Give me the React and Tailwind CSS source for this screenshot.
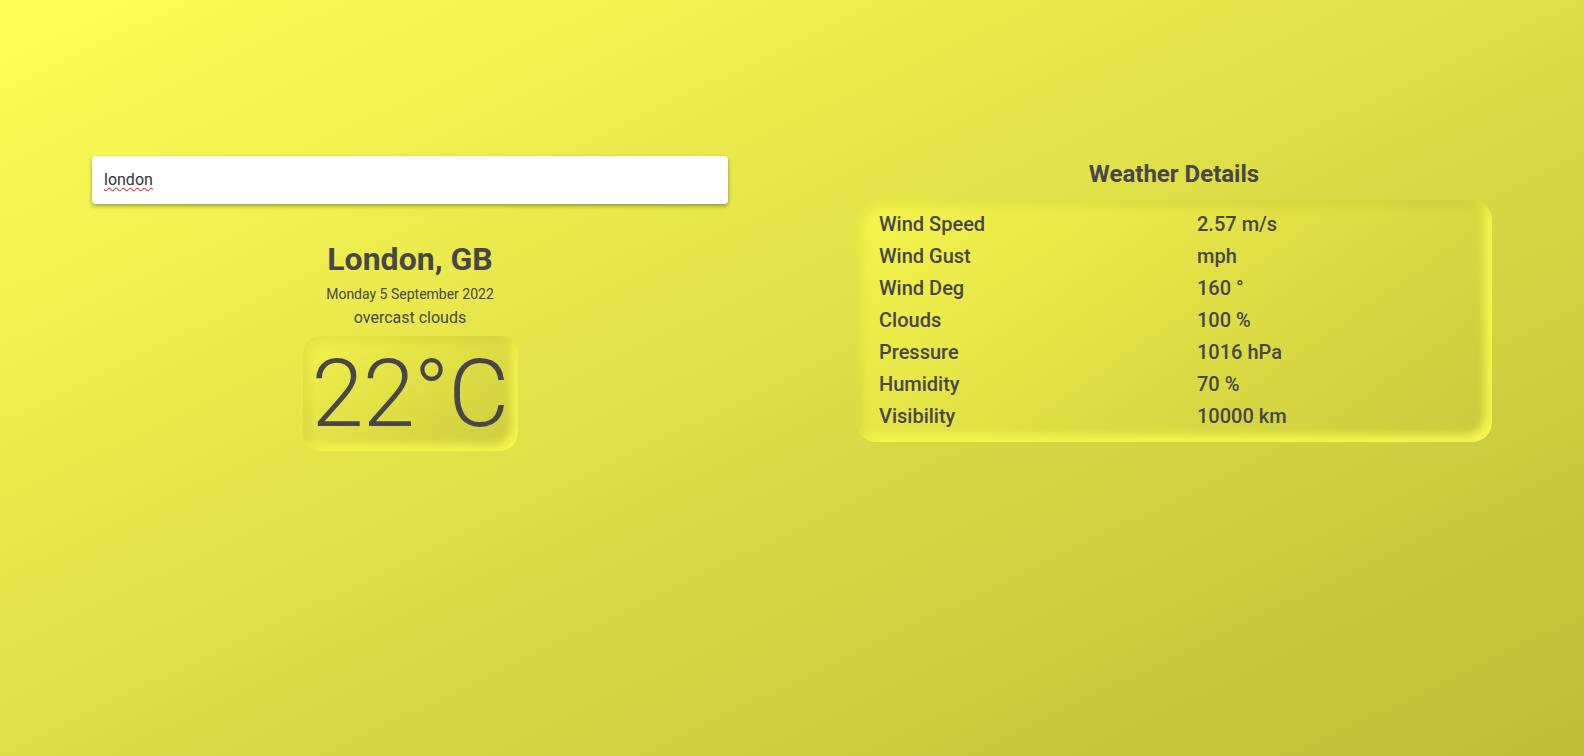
import React from 'react';

const details = [
  { label: 'Wind Speed', value: '2.57 m/s' },
  { label: 'Wind Gust', value: 'mph' },
  { label: 'Wind Deg', value: '160 °' },
  { label: 'Clouds', value: '100 %' },
  { label: 'Pressure', value: '1016 hPa' },
  { label: 'Humidity', value: '70 %' },
  { label: 'Visibility', value: '10000 km' },
];

const App = () => {
  return (
    <div className="h-screen w-full bg-[linear-gradient(to_bottom_right,#ffff57,#bdbd38)] font-['Roboto',sans-serif] text-[#474747]">
      <div className="grid grid-cols-2 gap-[128px] px-[92px] pt-[156px]">
        {/* left: search + current weather */}
        <div className="flex flex-col items-center">
          <div className="w-full h-[48px] bg-white rounded-[4px] shadow-[0_2px_4px_rgba(0,0,0,0.35)] flex items-center px-3">
            <span className="text-base text-[#333] underline decoration-wavy decoration-red-600 decoration-1 underline-offset-2">london</span>
          </div>
          <h1 className="mt-[38px] text-[32px] leading-[34px] font-bold">London, GB</h1>
          <p className="mt-[9px] text-sm leading-[18px]">Monday 5 September 2022</p>
          <p className="mt-[5px] text-base leading-[20px]">overcast clouds</p>
          <div className="mt-[8px] w-[215px] h-[115px] rounded-[18px] flex items-center justify-center bg-[linear-gradient(145deg,#f3f24c,#cccb3e)] shadow-[inset_5px_5px_10px_rgba(120,120,0,0.12),inset_-6px_-6px_10px_#f7f74e]">
            <span className="text-[94px] leading-none font-light tracking-[-1px]">22°C</span>
          </div>
        </div>

        {/* right: details */}
        <div className="flex flex-col items-center">
          <h2 className="text-[24px] leading-[32px] font-bold mt-[2px]">Weather Details</h2>
          <div className="mt-[10px] w-full rounded-[20px] pl-[23px] pt-[8px] pb-[10px] bg-[linear-gradient(145deg,#f5f54d,#c9c93d)] shadow-[inset_6px_6px_10px_rgba(120,120,0,0.12),inset_-7px_-7px_10px_#f7f74e]">
            {details.map((d) => (
              <div key={d.label} className="grid grid-cols-[318px_1fr] h-[32px] items-center text-[20px] font-medium">
                <span>{d.label}</span>
                <span>{d.value}</span>
              </div>
            ))}
          </div>
        </div>
      </div>
    </div>
  );
};

export default App;
